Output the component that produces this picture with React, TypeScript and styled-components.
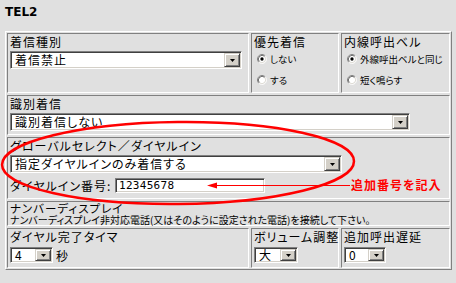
import React from "react";
import styled, { createGlobalStyle } from "styled-components";

const GlobalStyle = createGlobalStyle`
    html, body {
        margin: 0;
        padding: 0;
        background: #e0e0e0;
    }
    body {
        font-family: "Noto Sans CJK JP", sans-serif;
        color: #000;
    }
`;

const Page = styled.div`
    position: relative;
    width: 456px;
    height: 283px;
    padding: 5px 0 0 5px;
    box-sizing: border-box;
    overflow: hidden;
`;

const Title = styled.h1`
    margin: 0 0 12px 0;
    height: 14px;
    font-family: "DejaVu Sans", sans-serif;
    font-size: 12px;
    font-weight: bold;
    line-height: 14px;
`;

const Board = styled.div`
    display: grid;
    grid-template-columns: 242px 88px 109px;
    grid-template-rows: 60px 40px 62px 25px 40px;
    gap: 2px;
    padding: 1px;
    width: max-content;
    border: 1px solid;
    border-color: #fff #808080 #808080 #fff;
`;

const Cell = styled.div<{ $span?: number }>`
    grid-column: span ${p => p.$span ?? 1};
    box-sizing: border-box;
    border: 1px solid;
    border-color: #808080 #fff #fff #808080;
    padding: 0 1px 0 2px;
    display: flex;
    flex-direction: column;
    align-items: flex-start;
    min-width: 0;
`;

const Label = styled.div<{ $h?: number; $size?: number }>`
    height: ${p => p.$h ?? 17}px;
    font-size: ${p => p.$size ?? 12}px;
    line-height: ${p => Math.min(p.$h ?? 15, 15)}px;
    letter-spacing: 1px;
    font-feature-settings: "palt";
    white-space: nowrap;
`;

const Desc = styled.div`
    font-size: 10px;
    line-height: 10px;
    font-feature-settings: "palt";
    white-space: nowrap;
`;

const DropDown = styled.div<{ $w: number; $h?: number }>`
    width: ${p => p.$w}px;
    height: ${p => p.$h ?? 18}px;
    box-sizing: border-box;
    display: flex;
    align-items: stretch;
    flex-shrink: 0;
    background: #fff;
    border: 1px solid;
    border-color: #808080 #fff #fff #808080;
    box-shadow: inset 1px 1px 0 #404040, inset -1px -1px 0 #d4d0c8;
    padding: 1px;
`;

const DropValue = styled.span`
    flex: 1;
    padding-left: 3px;
    font-size: 12px;
    line-height: 14px;
    letter-spacing: 1px;
    font-feature-settings: "palt";
    white-space: nowrap;
    display: flex;
    align-items: center;
`;

const DropButton = styled.span`
    width: 16px;
    box-sizing: border-box;
    background: #d4d0c8;
    border: 1px solid;
    border-color: #d4d0c8 #404040 #404040 #d4d0c8;
    box-shadow: inset 1px 1px 0 #fff, inset -1px -1px 0 #808080;
    display: flex;
    align-items: center;
    justify-content: center;
`;

const Options = styled.div`
    display: flex;
    flex-direction: column;
    gap: 7px;
    margin-top: 1px;
`;

const Option = styled.div`
    display: flex;
    align-items: center;
    gap: 3px;
    height: 14px;
    margin-left: 3px;
    font-size: 9.5px;
    font-feature-settings: "palt";
    white-space: nowrap;
`;

const InlineRow = styled.div<{ $top?: number }>`
    display: flex;
    align-items: center;
    gap: 3px;
    margin-top: ${p => p.$top ?? 0}px;
`;

const FieldLabel = styled.span`
    width: 102px;
    font-size: 12px;
    line-height: 15px;
    letter-spacing: 1px;
    font-feature-settings: "palt";
    white-space: nowrap;
`;

const TextBox = styled.div`
    width: 150px;
    height: 15px;
    box-sizing: border-box;
    background: #fff;
    border: 1px solid;
    border-color: #808080 #fff #fff #808080;
    box-shadow: inset 1px 1px 0 #404040, inset -1px -1px 0 #d4d0c8;
    padding: 0 0 0 3px;
    font-family: "DejaVu Sans Mono", monospace;
    font-size: 11px;
    line-height: 13px;
    letter-spacing: 0.3px;
`;

const Unit = styled.span`
    font-size: 12px;
    line-height: 15px;
`;

const Overlay = styled.svg`
    position: absolute;
    left: 0;
    top: 0;
    pointer-events: none;
`;

const Note = styled.div`
    position: absolute;
    left: 351px;
    top: 177px;
    color: #f00;
    font-size: 12px;
    font-weight: bold;
    line-height: 15px;
    letter-spacing: 1px;
    font-feature-settings: "palt";
    white-space: nowrap;
`;

const Select: React.FC<{ value: string; w: number; h?: number }> = ({ value, w, h }) => (
    <DropDown $w={w} $h={h}>
        <DropValue>{value}</DropValue>
        <DropButton>
            <svg width="5" height="3" viewBox="0 0 5 3">
                <polygon points="0,0 5,0 2.5,3" fill="#000" />
            </svg>
        </DropButton>
    </DropDown>
);

const Radio: React.FC<{ checked?: boolean }> = ({ checked }) => (
    <svg width="10" height="10" viewBox="0 0 12 12">
        <circle cx="6" cy="6" r="5" fill="#fff" />
        <path d="M2.11 9.89 A5.5 5.5 0 0 1 9.89 2.11" fill="none" stroke="#808080" />
        <path d="M9.89 2.11 A5.5 5.5 0 0 1 2.11 9.89" fill="none" stroke="#fff" />
        <path d="M2.82 9.18 A4.5 4.5 0 0 1 9.18 2.82" fill="none" stroke="#404040" />
        <path d="M9.18 2.82 A4.5 4.5 0 0 1 2.82 9.18" fill="none" stroke="#d4d0c8" />
        {checked && <circle cx="6" cy="6" r="2" fill="#000" />}
    </svg>
);

export default function App() {
    return (
        <Page>
            <GlobalStyle />
            <Title>TEL2</Title>
            <Board>
                <Cell>
                    <Label>着信種別</Label>
                    <Select value="着信禁止" w={232} />
                </Cell>
                <Cell>
                    <Label>優先着信</Label>
                    <Options>
                        <Option><Radio checked />しない</Option>
                        <Option><Radio />する</Option>
                    </Options>
                </Cell>
                <Cell>
                    <Label>内線呼出ベル</Label>
                    <Options>
                        <Option><Radio checked />外線呼出ベルと同じ</Option>
                        <Option><Radio />短く鳴らす</Option>
                    </Options>
                </Cell>

                <Cell $span={3}>
                    <Label>識別着信</Label>
                    <Select value="識別着信しない" w={400} />
                </Cell>

                <Cell $span={3}>
                    <Label>グローバルセレクト／ダイヤルイン</Label>
                    <Select value="指定ダイヤルインのみ着信する" w={332} />
                    <InlineRow $top={5}>
                        <FieldLabel>ダイヤルイン番号:</FieldLabel>
                        <TextBox>12345678</TextBox>
                    </InlineRow>
                </Cell>

                <Cell $span={3}>
                    <Label $h={13} $size={11.5}>ナンバーディスプレイ</Label>
                    <Desc>ナンバーディスプレイ非対応電話(又はそのように設定された電話)を接続して下さい。</Desc>
                </Cell>

                <Cell>
                    <Label>ダイヤル完了タイマ</Label>
                    <InlineRow $top={1}>
                        <Select value="4" w={43} h={16} />
                        <Unit>秒</Unit>
                    </InlineRow>
                </Cell>
                <Cell>
                    <Label>ボリューム調整</Label>
                    <InlineRow $top={1}>
                        <Select value="大" w={44} h={16} />
                    </InlineRow>
                </Cell>
                <Cell>
                    <Label>追加呼出遅延</Label>
                    <InlineRow $top={1}>
                        <Select value="0" w={42} h={16} />
                    </InlineRow>
                </Cell>
            </Board>

            <Overlay width="456" height="283">
                <ellipse
                    cx="178"
                    cy="163"
                    rx="176"
                    ry="41"
                    transform="rotate(-0.6 178 163)"
                    fill="none"
                    stroke="#f00"
                    strokeWidth="2.5"
                />
                <line x1="214" y1="185.5" x2="350" y2="185.5" stroke="#f00" strokeWidth="1" />
                <polygon points="207,185.5 217,182.5 217,188.5" fill="#f00" />
            </Overlay>
            <Note>追加番号を記入</Note>
        </Page>
    );
}
